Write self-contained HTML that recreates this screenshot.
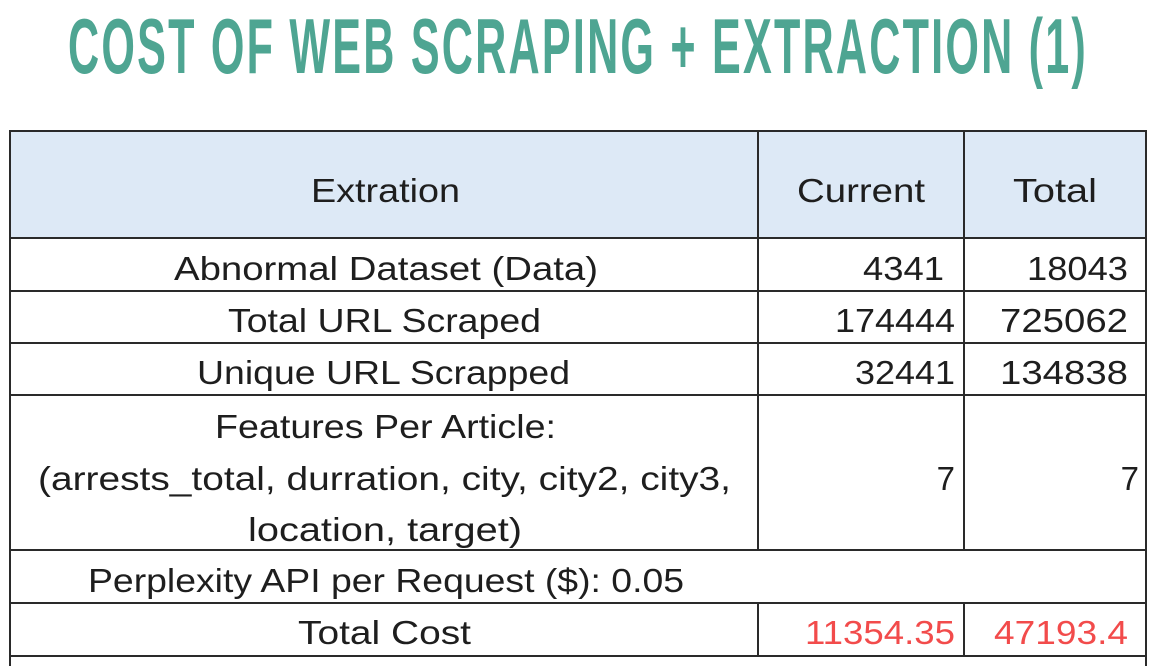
<!DOCTYPE html>
<html><head><meta charset="utf-8"><style>
html,body{margin:0;padding:0;background:#fff;width:1154px;height:666px;overflow:hidden}
svg{display:block}
text{font-family:"Liberation Sans",sans-serif}
.t{font-size:33px;fill:#1e1e1e}
.r{font-size:33px;fill:#f24b4b}
</style></head><body>
<svg width="1154" height="666" viewBox="0 0 1154 666">
<text x="68" y="73" textLength="1020" lengthAdjust="spacingAndGlyphs" style="font-size:78px;font-weight:bold;fill:#4ea592;letter-spacing:4px">COST OF WEB SCRAPING + EXTRACTION (1)</text>
<rect x="10" y="131" width="1136" height="107" fill="#dde9f6"/>
<g stroke="#2a2a2a" stroke-width="2" fill="none">
<line x1="9" y1="131" x2="1147" y2="131"/>
<line x1="9" y1="238" x2="1147" y2="238"/>
<line x1="9" y1="291" x2="1147" y2="291"/>
<line x1="9" y1="343" x2="1147" y2="343"/>
<line x1="9" y1="395" x2="1147" y2="395"/>
<line x1="9" y1="550" x2="1147" y2="550"/>
<line x1="9" y1="603" x2="1147" y2="603"/>
<line x1="9" y1="656" x2="1147" y2="656"/>
<line x1="10" y1="131" x2="10" y2="666"/>
<line x1="1146" y1="131" x2="1146" y2="666"/>
<line x1="758" y1="131" x2="758" y2="550"/>
<line x1="964" y1="131" x2="964" y2="550"/>
<line x1="758" y1="603" x2="758" y2="656"/>
<line x1="964" y1="603" x2="964" y2="656"/>
</g>
<text class="t" x="311" y="202" textLength="149" lengthAdjust="spacingAndGlyphs">Extration</text>
<text class="t" x="797" y="202" textLength="128" lengthAdjust="spacingAndGlyphs">Current</text>
<text class="t" x="1013" y="202" textLength="84" lengthAdjust="spacingAndGlyphs">Total</text>
<text class="t" x="174" y="280" textLength="424" lengthAdjust="spacingAndGlyphs">Abnormal Dataset (Data)</text>
<text class="t" x="863" y="280" textLength="81" lengthAdjust="spacingAndGlyphs">4341</text>
<text class="t" x="1027" y="280" textLength="101" lengthAdjust="spacingAndGlyphs">18043</text>
<text class="t" x="228" y="332" textLength="313" lengthAdjust="spacingAndGlyphs">Total URL Scraped</text>
<text class="t" x="835" y="332" textLength="120" lengthAdjust="spacingAndGlyphs">174444</text>
<text class="t" x="1000" y="332" textLength="128" lengthAdjust="spacingAndGlyphs">725062</text>
<text class="t" x="197" y="384" textLength="373" lengthAdjust="spacingAndGlyphs">Unique URL Scrapped</text>
<text class="t" x="855" y="384" textLength="100" lengthAdjust="spacingAndGlyphs">32441</text>
<text class="t" x="1000" y="384" textLength="128" lengthAdjust="spacingAndGlyphs">134838</text>
<text class="t" x="215" y="438" textLength="341" lengthAdjust="spacingAndGlyphs">Features Per Article:</text>
<text class="t" x="38" y="490" textLength="693" lengthAdjust="spacingAndGlyphs">(arrests_total, durration, city, city2, city3,</text>
<text class="t" x="248" y="541" textLength="274" lengthAdjust="spacingAndGlyphs">location, target)</text>
<text class="t" x="955" y="490" text-anchor="end">7</text>
<text class="t" x="1139" y="490" text-anchor="end">7</text>
<text class="t" x="88" y="592" textLength="596" lengthAdjust="spacingAndGlyphs">Perplexity API per Request ($): 0.05</text>
<text class="t" x="298" y="644" textLength="173" lengthAdjust="spacingAndGlyphs">Total Cost</text>
<text class="r" x="805" y="644" textLength="150" lengthAdjust="spacingAndGlyphs">11354.35</text>
<text class="r" x="994" y="644" textLength="134" lengthAdjust="spacingAndGlyphs">47193.4</text>
</svg>
</body></html>
